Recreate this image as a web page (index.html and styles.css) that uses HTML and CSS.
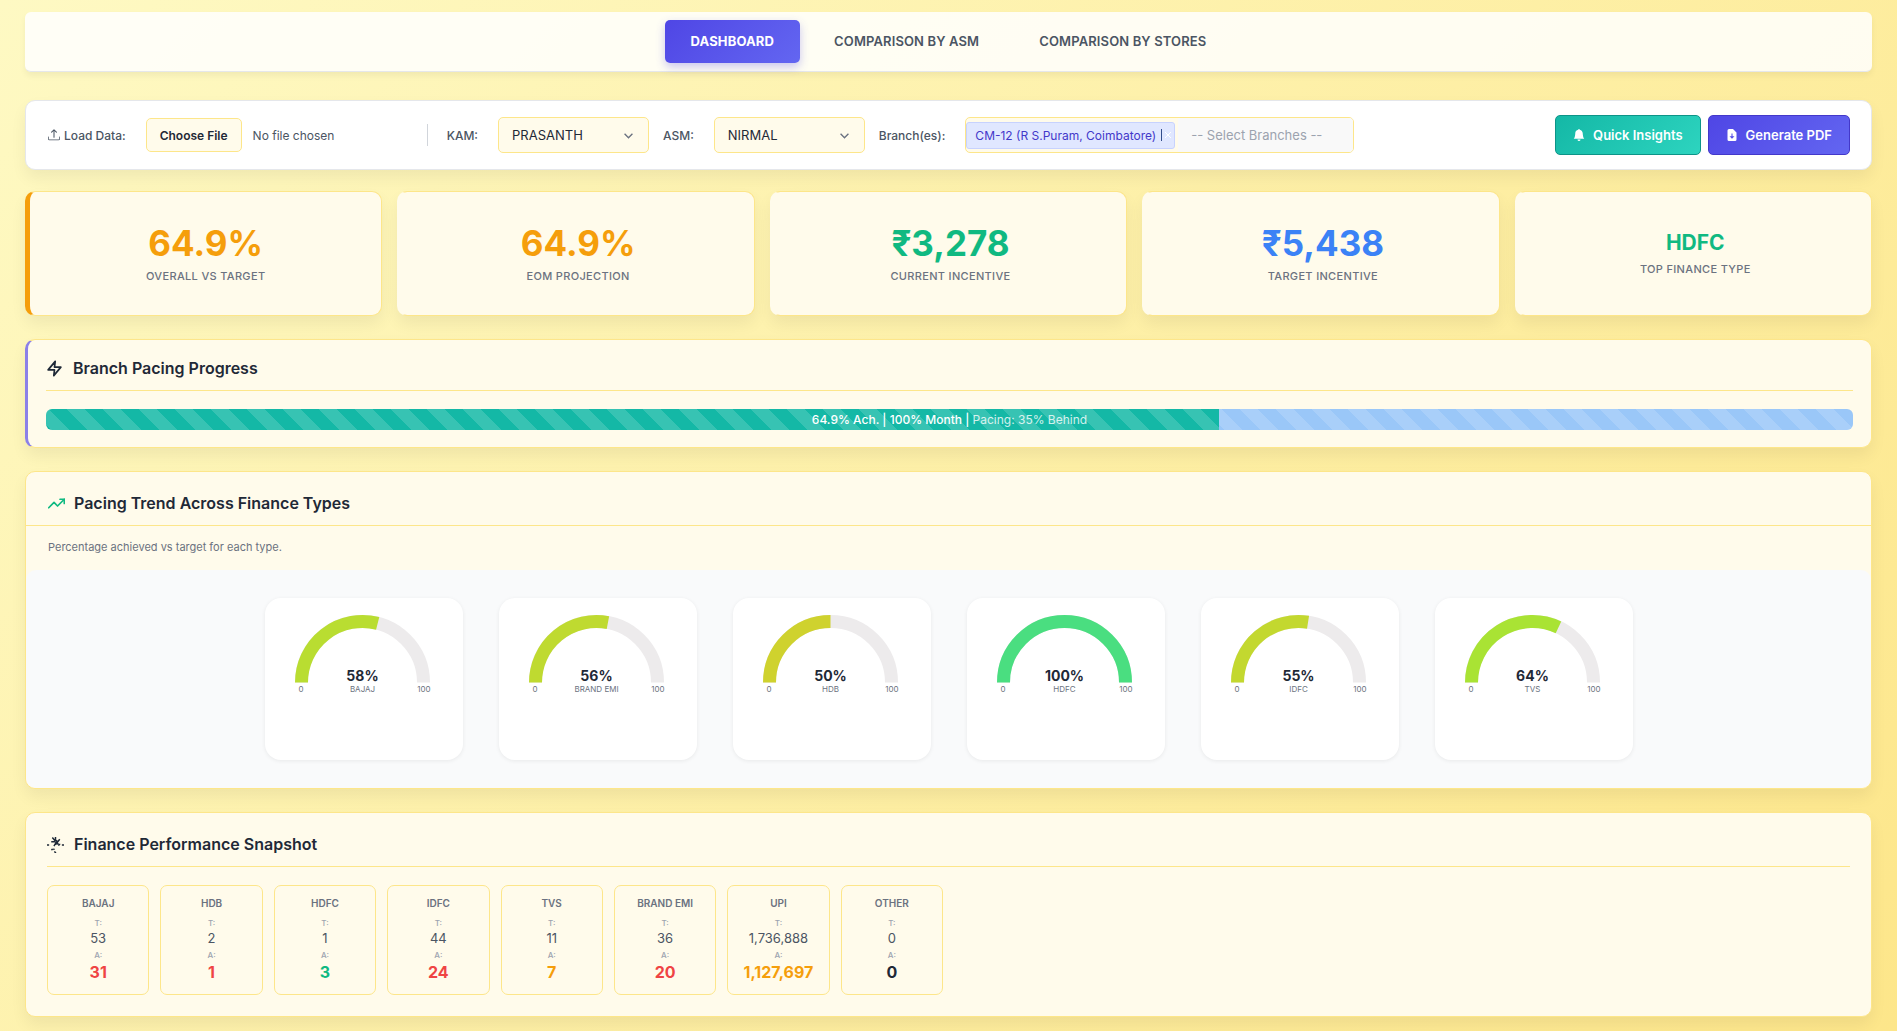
FILE: index.html
```
<!DOCTYPE html>
<html lang="en">
<head>
<meta charset="utf-8">
<meta name="viewport" content="width=device-width, initial-scale=1">
<title>Branch Dashboard</title>
<link rel="stylesheet" href="styles.css">
</head>
<body>
<nav class="tabs">
  <button class="tab tab-active" type="button">DASHBOARD</button>
  <button class="tab" type="button">COMPARISON BY ASM</button>
  <button class="tab" type="button">COMPARISON BY STORES</button>
</nav>

<main class="page">
  <section class="controls">
    <label class="control-label" for="file">
      <svg class="icon-upload" viewBox="0 0 16 16" fill="currentColor"><path d="M.5 9.9a.5.5 0 0 1 .5.5v2.5a1 1 0 0 0 1 1h12a1 1 0 0 0 1-1v-2.5a.5.5 0 0 1 1 0v2.5a2 2 0 0 1-2 2H2a2 2 0 0 1-2-2v-2.5a.5.5 0 0 1 .5-.5z"/><path d="M7.5.5a.7.7 0 0 1 1 0l3.200 3.200a.7.7 0 0 1-1 1L8.700 2.700v8.300a.7.7 0 0 1-1.400 0V2.700L5.300 4.700a.7.7 0 0 1-1-1z"/></svg>
      Load Data:
    </label>
    <input class="file" id="file" type="file">
    <span class="divider"></span>
    <label class="control-label" for="kam">KAM:</label>
    <select class="select" id="kam"><option>PRASANTH</option></select>
    <label class="control-label" for="asm">ASM:</label>
    <select class="select" id="asm"><option>NIRMAL</option></select>
    <label class="control-label" for="branches">Branch(es):</label>
    <div class="branches">
      <span class="chip">CM-12 (R S.Puram, Coimbatore)<button class="chip-remove" type="button" aria-label="Remove branch"><svg viewBox="0 0 8 8"><path d="M1 1l6 6M7 1L1 7" stroke="#fff" stroke-width="1"/></svg></button></span>
      <input class="branch-input" id="branches" type="text" placeholder="-- Select Branches --">
    </div>
    <div class="actions">
      <button class="action action-teal" type="button">
        <svg viewBox="0 0 16 16" fill="currentColor"><path d="M8 16a2 2 0 0 0 2-2H6a2 2 0 0 0 2 2zm.995-14.901a1 1 0 1 0-1.99 0A5 5 0 0 0 3 6c0 1.100-.5 6-2 7h14c-1.500-1-2-5.900-2-7 0-2.420-1.720-4.440-4.005-4.901z"/></svg>
        Quick Insights
      </button>
      <button class="action action-indigo" type="button">
        <svg viewBox="0 0 16 16" fill="currentColor"><path fill-rule="evenodd" d="M9.300 0H4a2 2 0 0 0-2 2v12a2 2 0 0 0 2 2h8a2 2 0 0 0 2-2V4.700L9.300 0zM8.700 6v3.500h2.600L8 13 4.700 9.500h2.600V6z"/></svg>
        Generate PDF
      </button>
    </div>
  </section>

  <section class="kpis">
    <div class="kpi kpi-flag"><div class="kpi-value orange">64.9%</div><div class="kpi-label">OVERALL VS TARGET</div></div>
    <div class="kpi"><div class="kpi-value orange">64.9%</div><div class="kpi-label">EOM PROJECTION</div></div>
    <div class="kpi"><div class="kpi-value green">₹3,278</div><div class="kpi-label">CURRENT INCENTIVE</div></div>
    <div class="kpi"><div class="kpi-value blue">₹5,438</div><div class="kpi-label">TARGET INCENTIVE</div></div>
    <div class="kpi"><div class="kpi-value kpi-text green">HDFC</div><div class="kpi-label">TOP FINANCE TYPE</div></div>
  </section>

  <section class="panel pacing">
    <h2 class="title">
      <svg class="icon-title" viewBox="0 0 24 24" fill="none" stroke="currentColor" stroke-width="2.400" stroke-linecap="round" stroke-linejoin="round"><path d="M13 2L3 14h9l-1 8 10-12h-9l1-8z"/></svg>
      Branch Pacing Progress
    </h2>
    <div class="progress">
      <div class="progress-done" style="width:64.9%"></div>
      <div class="progress-rest"></div>
      <div class="progress-text">64.9% Ach. | 100% Month | <span>Pacing: 35% Behind</span></div>
    </div>
  </section>

  <section class="panel trend">
    <h2 class="title trend-title">
      <svg class="icon-title green" viewBox="0 0 24 24" fill="none" stroke="currentColor" stroke-width="2.400" stroke-linecap="round" stroke-linejoin="round"><path d="M23 6l-9.500 9.500-5-5L1 18"/><path d="M17 6h6v6"/></svg>
      Pacing Trend Across Finance Types
    </h2>
    <p class="note">Percentage achieved vs target for each type.</p>
    <div class="gauges" id="gauges"></div>
  </section>

  <section class="panel snapshot">
    <h2 class="title">
      <svg class="icon-title" viewBox="0 0 16 16" fill="none" stroke="currentColor" stroke-width="1.400"><path d="M0 8.500h2M14 8.500h2M5 1.500l3 3.500M8 1v3l2.500 1.500M4 5.500h4M12 3l-4 5M6.500 9.500L9 5.500l2.500 3.500M8.500 7l4 1M4 13l1.500-.5M7 14.500l1.500 2M6 12l1 1"/></svg>
      Finance Performance Snapshot
    </h2>
    <div class="minis" id="minis"></div>
  </section>
</main>
<script src="app.js"></script>
</body>
</html>
```
FILE: styles.css
```
* { box-sizing: border-box; }
body {
  margin: 0;
  padding: 12px 25px 14px;
  min-height: 100vh;
  font-family: Inter, "Noto Sans", sans-serif;
  color: #1f2937;
  background: linear-gradient(135deg, #fef9c3 0%, #fde68a 100%);
}
button, input, select { font-family: inherit; }
.orange { color: #f59e0b; }
.green { color: #10b981; }
.blue { color: #3b82f6; }
.red { color: #ef4444; }
.dark { color: #1f2937; }

.tabs {
  display: flex;
  justify-content: center;
  gap: 8px;
  padding: 8px;
  border-bottom: 1px solid #e5e7eb;
  border-radius: 6px;
  background: rgba(255, 255, 255, .85);
  box-shadow: 0 4px 6px rgba(0, 0, 0, .05);
}
.tab {
  height: 43px;
  padding: 0 26px 2px;
  border: 0;
  border-radius: 5px;
  background: none;
  color: #4b5563;
  font-size: 13px;
  font-weight: 600;
  letter-spacing: .01em;
}
.tab-active {
  color: #fff;
  font-weight: 700;
  background: linear-gradient(135deg, #4f46e5, #6366f1);
  box-shadow: 0 4px 10px rgba(79, 70, 229, .3);
}

.page {
  display: flex;
  flex-direction: column;
  gap: 23px;
  margin-top: 28px;
}
.controls, .kpi, .panel { box-shadow: 0 8px 16px rgba(0, 0, 0, .06); }
.controls {
  display: flex;
  align-items: center;
  height: 70px;
  padding: 0 21px 0 22px;
  border: 1px solid #e5e7eb;
  border-radius: 10px;
  background: #fff;
  margin-bottom: -2px;
}
.control-label {
  display: flex;
  align-items: center;
  gap: 4px;
  margin-right: 20px;
  color: #4b5563;
  font-size: 12px;
  font-weight: 500;
  white-space: nowrap;
}
.icon-upload { width: 12px; height: 12px; }
.file {
  width: 266px;
  color: #4b5563;
  font-size: 12px;
}
.file::file-selector-button {
  height: 34px;
  margin: 0 11px 0 0;
  padding: 0 13px;
  border: 1px solid #fde68a;
  border-radius: 5px;
  background: #fffbeb;
  color: #1f2937;
  font-family: inherit;
  font-size: 12px;
  font-weight: 600;
}
.divider {
  width: 1px;
  height: 22px;
  margin: 0 19px 0 15px;
  background: #d1d5db;
}
.select {
  width: 151px;
  height: 36px;
  margin-right: 14px;
  padding: 0 13px;
  appearance: none;
  border: 1px solid #fde68a;
  border-radius: 5px;
  color: #1f2937;
  font-size: 13px;
  background: #fffbeb url("data:image/svg+xml,%3Csvg xmlns='http://www.w3.org/2000/svg' viewBox='0 0 8 8' fill='none' stroke='%236b7280' stroke-width='1.200'%3E%3Cpath d='M0.500 2.500L4 6L7.500 2.500'/%3E%3C/svg%3E") no-repeat right 15px center / 9px 9px;
}
.branches {
  display: flex;
  align-items: center;
  gap: 3px;
  width: 389px;
  height: 36px;
  border: 1px solid #fde68a;
  border-radius: 5px;
  background: #fffbeb;
  overflow: hidden;
}
.chip {
  display: flex;
  align-items: center;
  flex: none;
  height: 27px;
  padding: 0 2px 0 8px;
  border: 1px solid #c7d2fe;
  border-radius: 3px;
  background: #e0e7ff;
  color: #4338ca;
  font-size: 12px;
  white-space: nowrap;
}
.chip-remove {
  display: flex;
  align-items: center;
  height: 12px;
  margin-left: 5px;
  padding: 0 0 0 2px;
  border: 0;
  border-left: 1px solid #334e8b;
  background: none;
}
.chip-remove svg { width: 8px; height: 8px; }
.branch-input {
  flex: 1;
  min-width: 0;
  height: 34px;
  padding: 0 13px;
  border: 0;
  background: #f9f9f9;
  font-size: 13px;
}
.branch-input::placeholder { color: #9ca3af; }
.actions {
  display: flex;
  gap: 7px;
  margin-left: auto;
}
.action {
  display: flex;
  align-items: center;
  gap: 8px;
  height: 40px;
  padding: 0 17px 1px;
  border: 1px solid;
  border-radius: 5px;
  color: #fff;
  font-size: 13px;
  font-weight: 600;
  white-space: nowrap;
}
.action svg { width: 12px; height: 12px; }
.action-teal {
  border-color: #0d9488;
  background: linear-gradient(135deg, #14b8a6, #2dd4bf);
}
.action-indigo {
  border-color: #4338ca;
  background: linear-gradient(135deg, #4f46e5, #6366f1);
}

.kpis {
  display: grid;
  grid-template-columns: repeat(5, 1fr);
  gap: 15px;
}
.kpi {
  display: flex;
  flex-direction: column;
  align-items: center;
  justify-content: center;
  gap: 8px;
  height: 125px;
  border: 1px solid #fde68a;
  border-left: 5px solid transparent;
  border-radius: 10px;
  background: #fffbeb;
}
.kpi-flag { border-left-color: #f59e0b; }
.kpi-value {
  font-size: 35px;
  font-weight: 700;
  line-height: 36px;
}
.kpi-text { font-size: 21px; line-height: 22px; }
.kpi-label {
  color: #6b7280;
  font-size: 11px;
  font-weight: 500;
  line-height: 14px;
  letter-spacing: .03em;
}

.panel {
  border: 1px solid #fde68a;
  border-radius: 10px;
  background: #fffbeb;
  overflow: hidden;
}
.title {
  display: flex;
  align-items: center;
  gap: 10px;
  margin: 0;
  border-bottom: 1px solid #fde68a;
  font-size: 16px;
  font-weight: 600;
  line-height: 20px;
}
.icon-title { width: 17px; height: 17px; }
.pacing {
  padding: 18px 18px 17px;
  border-left: 3px solid #8b80e8;
}
.pacing .title { padding-bottom: 12px; }
.progress {
  position: relative;
  display: flex;
  height: 21px;
  margin-top: 18px;
  border-radius: 6px;
  overflow: hidden;
}
.progress-done, .progress-rest {
  background-image: linear-gradient(45deg, rgba(255, 255, 255, .15) 25%, transparent 25%, transparent 50%, rgba(255, 255, 255, .15) 50%, rgba(255, 255, 255, .15) 75%, transparent 75%);
  background-size: 36px 36px;
  background-position: 20px 0;
}
.progress-done { background-color: #14b8a6; }
.progress-rest { flex: 1; background-color: #9ac7f8; }
.progress-text {
  position: absolute;
  inset: 0;
  color: #fff;
  font-size: 12px;
  font-weight: 500;
  line-height: 21px;
  text-align: center;
}
.progress-text span { font-weight: 400; opacity: .8; }

.trend-title { padding: 21px 22px 12px; gap: 9px; }
.note {
  margin: 0;
  padding: 14px 22px 15px;
  color: #6b7280;
  font-size: 11px;
  line-height: 15px;
}
.gauges {
  display: flex;
  justify-content: center;
  gap: 36px;
  padding: 28px 18px;
  border-radius: 10px;
  background: #f9fafb;
}
.gauge {
  width: 198px;
  height: 162px;
  border-radius: 16px;
  background: #fff;
  box-shadow: 0 1px 4px rgba(0, 0, 0, .07);
}
.gauge svg { display: block; }
.gauge-value { font-size: 14px; font-weight: 700; fill: #1f2937; }
.gauge-label { font-size: 8px; fill: #6b7280; }

.snapshot { padding: 21px; }
.snapshot .title { padding-bottom: 12px; }
.minis {
  display: grid;
  grid-template-columns: repeat(auto-fill, minmax(100px, 1fr));
  gap: 11px;
  margin-top: 18px;
}
.mini {
  display: flex;
  flex-direction: column;
  align-items: center;
  padding: 9px 0 12px;
  border: 1px solid #fde68a;
  border-radius: 7px;
}
.mini-name { margin-bottom: 3px; color: #6b7280; font-size: 10px; font-weight: 600; line-height: 16px; }
.mini-key { margin-top: 3px; color: #9ca3af; font-size: 8px; font-weight: 500; line-height: 13px; }
.mini-target { color: #4b5563; font-size: 13px; line-height: 16px; }
.mini-actual { font-size: 16px; font-weight: 700; line-height: 20px; }
```
FILE: app.js
```
const gauges = [
  ["BAJAJ", 58, "#b9dd31"],
  ["BRAND EMI", 56, "#bfda30"],
  ["HDB", 50, "#cfd22e"],
  ["HDFC", 100, "#4ade80"],
  ["IDFC", 55, "#c3d82f"],
  ["TVS", 64, "#a9e334"]
];
const cx = 97.5, cy = 84.5, r = 61;
const arc = pct => {
  const a = Math.PI * (1 - pct / 100);
  return `M${cx - r} ${cy}A${r} ${r} 0 0 1 ${cx + r * Math.cos(a)} ${cy - r * Math.sin(a)}`;
};
document.getElementById("gauges").innerHTML = gauges.map(([name, pct, color]) => `
  <div class="gauge">
    <svg width="198" height="110" text-anchor="middle" fill="none" stroke-width="13">
      <path d="${arc(100)}" stroke="#edebec"/>
      <path d="${arc(pct)}" stroke="${color}"/>
      <text class="gauge-value" x="${cx}" y="83">${pct}%</text>
      <text class="gauge-label" x="36" y="94">0</text>
      <text class="gauge-label" x="${cx}" y="94">${name}</text>
      <text class="gauge-label" x="159" y="94">100</text>
    </svg>
  </div>`).join("");

const minis = [
  ["BAJAJ", "53", "31", "red"],
  ["HDB", "2", "1", "red"],
  ["HDFC", "1", "3", "green"],
  ["IDFC", "44", "24", "red"],
  ["TVS", "11", "7", "orange"],
  ["BRAND EMI", "36", "20", "red"],
  ["UPI", "1,736,888", "1,127,697", "orange"],
  ["OTHER", "0", "0", "dark"]
];
document.getElementById("minis").innerHTML = minis.map(([name, target, actual, tone]) => `
  <div class="mini">
    <div class="mini-name">${name}</div>
    <div class="mini-key">T:</div>
    <div class="mini-target">${target}</div>
    <div class="mini-key">A:</div>
    <div class="mini-actual ${tone}">${actual}</div>
  </div>`).join("");
```
